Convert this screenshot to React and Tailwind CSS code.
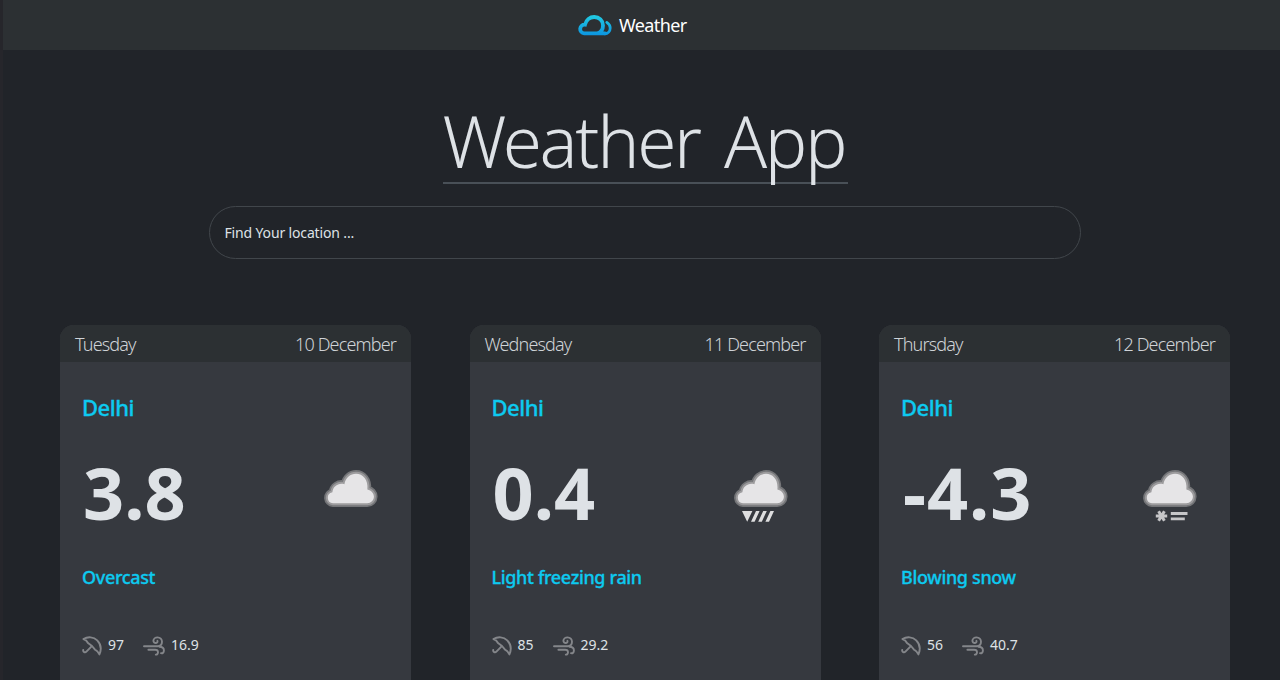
import React from "react";

const days = [
  { day: "Tuesday", date: "10 December", temp: "3.8", text: "Overcast", kind: "cloud", humidity: "97", wind: "16.9" },
  { day: "Wednesday", date: "11 December", temp: "0.4", text: "Light freezing rain", kind: "rain", humidity: "85", wind: "29.2" },
  { day: "Thursday", date: "12 December", temp: "-4.3", text: "Blowing snow", kind: "snow", humidity: "56", wind: "40.7" },
];

function Logo() {
  return (
    <svg className="h-[21px] w-[34px]" viewBox="0 0 34 21" fill="none" stroke="url(#sky)" strokeWidth="3.8" strokeLinecap="round">
      <defs>
        <linearGradient id="sky" gradientUnits="userSpaceOnUse" x1="0" y1="0" x2="0" y2="21">
          <stop offset="0" stopColor="#22cbe2" />
          <stop offset="1" stopColor="#0b93e0" />
        </linearGradient>
      </defs>
      <path d="M27 18.4H6.2A4.4 4.4 0 0 1 7 9.6C8.2 4.8 12 2 16.2 2C21.2 2 25 5.8 25 10.4C25 14.4 22.8 17.2 19.5 18.2" />
      <path d="M28.8 7.4C31 8.8 32.2 10.8 32.2 13C32.2 16 30 18.8 26.6 18.8" strokeWidth="2.8" />
    </svg>
  );
}

function CloudShape() {
  return (
    <path d="M14 39.3A5.6 5.6 0 0 1 13.4 28.2C14 22.6 19 18.6 25.4 20.2C26.6 13.6 31.4 9.8 37 9.8C44 9.8 49.4 16 48.4 25.4C52.4 26.2 54.9 29.2 54.9 32.6C54.9 36.4 52 39.3 48.2 39.3Z" />
  );
}

function ConditionIcon({ kind }) {
  return (
    <svg className="h-16 w-16" viewBox="0 0 64 64">
      <g strokeLinejoin="round">
        <g fill="#747578" stroke="#747578" strokeWidth="7.4"><CloudShape /></g>
        <g fill="#9c9b9d" stroke="#9c9b9d" strokeWidth="4"><CloudShape /></g>
        <g fill="#e6e5e7"><CloudShape /></g>
      </g>
      {kind === "rain" && (
        <path fill="#dededf" d="M13 47H23.4L18.2 57.8ZM27 47H30.6L25.6 57.8H22ZM34.2 47H37.8L32.8 57.8H29.2ZM41.4 47H45L40 57.8H36.4Z" />
      )}
      {kind === "snow" && (
        <g stroke="#c6c6c8" strokeWidth="3">
          <path d="M17.8 52H29.2M20.6 47.2L26.4 56.8M26.4 47.2L20.6 56.8" />
          <path d="M32.8 49.5H49.5M32.8 54.8H46.8" strokeWidth="2.8" />
        </g>
      )}
    </svg>
  );
}

function Umbrella() {
  return (
    <svg className="h-5 w-5" viewBox="0 0 20 20" fill="none" stroke="#84868a" strokeWidth="1.9" strokeLinecap="round" strokeLinejoin="round">
      <path d="M1.4 3C6 .4 11.6.8 15.2 4.4C19 8.2 19.4 13.8 17.4 18.4C16.4 16.4 15.2 14.6 13 13.6L10 10L6 7C5 4.8 3.4 3.6 1.4 3Z" />
      <path d="M9.6 10.4L4.4 15.6C3 17 .9 16 1.2 14" />
    </svg>
  );
}

function Wind() {
  return (
    <svg className="h-5 w-[22px]" viewBox="0 0 22 20" fill="none" stroke="#84868a" strokeWidth="1.9" strokeLinecap="round">
      <path d="M1 10.2H14.6C17.4 10.2 19 8.2 19 5.8C19 3.2 17.2 1.4 14.6 1.4C12.2 1.4 10.4 3 10.4 4.8C10.4 6.2 11.6 7.2 13 7C14.2 6.8 14.8 5.8 14.4 4.8" />
      <path d="M5.4 13.8H12C14 13.8 15 14.8 15 16.2C15 17.6 14 18.8 12.8 18.6" />
      <path d="M16.4 10.8C19.2 10.8 20.9 12.4 20.9 14.4C20.9 16.4 19.6 17.6 18 17.2" />
    </svg>
  );
}

function DayCard({ item }) {
  return (
    <article className="flex h-[400px] w-[351px] flex-col overflow-hidden rounded-t-[14px] bg-[#36393f]">
      <header className="flex h-[36.5px] items-center justify-between bg-[#2c3033] px-[15px] text-[18px] font-light leading-[38px] tracking-[-0.85px] text-[#cfd3d7]">
        <span className="pt-px">{item.day}</span>
        <span className="pt-px">{item.date}</span>
      </header>
      <div className="flex flex-col px-[22px]">
        <h2 className="mt-[30.5px] text-[22px] font-medium leading-[30px] tracking-[-0.5px] text-[#0dcaf0] [-webkit-text-stroke:0.3px_#0dcaf0]">Delhi</h2>
        <div className="mt-[36px] flex h-[68px] items-center justify-between pr-[6px]">
          <span className={"text-[72px] font-bold leading-[68px] " + (item.temp.startsWith("-") ? "pl-[2px] tracking-[0.9px]" : "pl-px")}>{item.temp}</span>
          <div className="pt-[8px]">
            <ConditionIcon kind={item.kind} />
          </div>
        </div>
        <p className="mt-[36px] text-[18px] font-medium leading-[30px] tracking-[-0.35px] text-[#0dcaf0] [-webkit-text-stroke:0.3px_#0dcaf0]">{item.text}</p>
        <div className="mt-[44px] flex h-5 items-center text-[14px] leading-5">
          <Umbrella />
          <span className="ml-[6px] w-[35px] pb-[2px]">{item.humidity}</span>
          <Wind />
          <span className="ml-[6px] pb-[2px]">{item.wind}</span>
        </div>
      </div>
    </article>
  );
}

export default function App() {
  return (
    <div className="h-[680px] overflow-hidden border-l-[3px] border-[#26262b] bg-[#212429] font-['Noto_Sans',sans-serif] text-[#dee2e6]">
      <nav className="flex h-[50px] items-center bg-[#2c3033] pl-[575px]">
        <Logo />
        <span className="ml-[7px] text-[18px] leading-[50px] tracking-[-0.6px] text-white">Weather</span>
      </nav>
      <main className="flex flex-col items-center pl-[7px]">
        <h1 className="mt-[44px] h-[90px] w-[405px] whitespace-nowrap border-b-2 border-[#495057] text-[71px] font-light leading-[94px] tracking-[-2.3px] [word-spacing:8px]">Weather App</h1>
        <div className="mt-[22px] flex h-[53px] w-[872px] items-center rounded-full border border-[#41464b] px-[14.5px] text-[14px] tracking-[-0.15px]">
          Find Your location ...
        </div>
      </main>
      <section className="mt-[66px] flex justify-between pl-[57px] pr-[50px]">
        {days.map((item) => (
          <DayCard key={item.day} item={item} />
        ))}
      </section>
    </div>
  );
}
